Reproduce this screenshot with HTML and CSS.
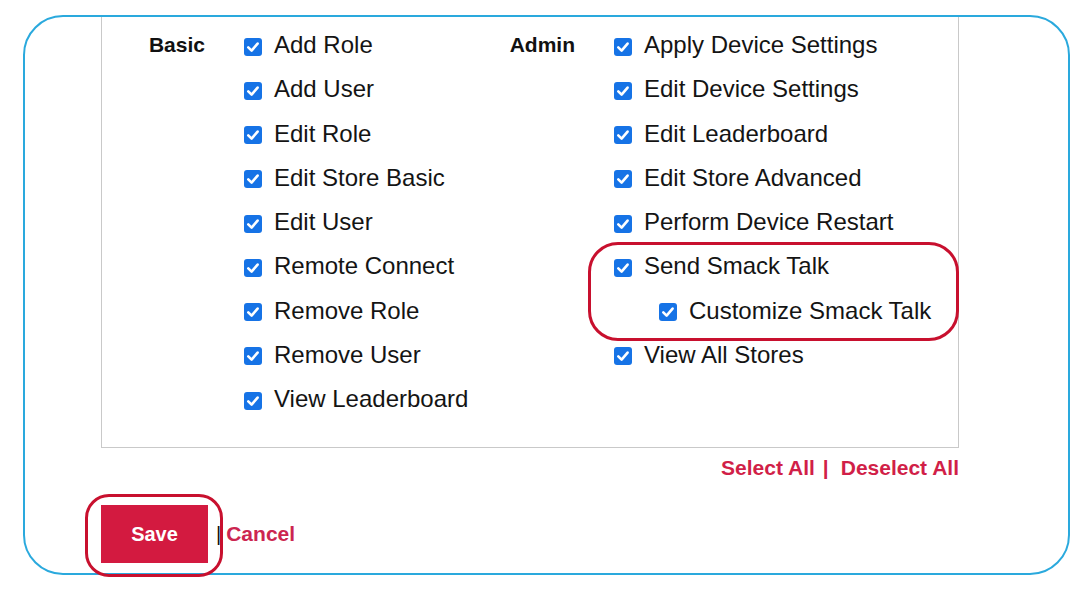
FILE: index.html
```html
<!DOCTYPE html>
<html lang="en">
<head>
<meta charset="utf-8">
<title>Permissions</title>
<link rel="stylesheet" href="styles.css">
</head>
<body>
<div class="page">
  <div class="frame">
    <div class="perm-box">
      <div class="perm-grid">
        <div class="group-label">Basic</div>
        <ul class="perm-list">
          <li><span class="cb"><svg viewBox="0 0 18 18"><path d="M4.3 9.4 L7.6 12.6 L13.6 5.6"/></svg></span>Add Role</li>
          <li><span class="cb"><svg viewBox="0 0 18 18"><path d="M4.3 9.4 L7.6 12.6 L13.6 5.6"/></svg></span>Add User</li>
          <li><span class="cb"><svg viewBox="0 0 18 18"><path d="M4.3 9.4 L7.6 12.6 L13.6 5.6"/></svg></span>Edit Role</li>
          <li><span class="cb"><svg viewBox="0 0 18 18"><path d="M4.3 9.4 L7.6 12.6 L13.6 5.6"/></svg></span>Edit Store Basic</li>
          <li><span class="cb"><svg viewBox="0 0 18 18"><path d="M4.3 9.4 L7.6 12.6 L13.6 5.6"/></svg></span>Edit User</li>
          <li><span class="cb"><svg viewBox="0 0 18 18"><path d="M4.3 9.4 L7.6 12.6 L13.6 5.6"/></svg></span>Remote Connect</li>
          <li><span class="cb"><svg viewBox="0 0 18 18"><path d="M4.3 9.4 L7.6 12.6 L13.6 5.6"/></svg></span>Remove Role</li>
          <li><span class="cb"><svg viewBox="0 0 18 18"><path d="M4.3 9.4 L7.6 12.6 L13.6 5.6"/></svg></span>Remove User</li>
          <li><span class="cb"><svg viewBox="0 0 18 18"><path d="M4.3 9.4 L7.6 12.6 L13.6 5.6"/></svg></span>View Leaderboard</li>
        </ul>
        <div class="group-label">Admin</div>
        <ul class="perm-list">
          <li><span class="cb"><svg viewBox="0 0 18 18"><path d="M4.3 9.4 L7.6 12.6 L13.6 5.6"/></svg></span>Apply Device Settings</li>
          <li><span class="cb"><svg viewBox="0 0 18 18"><path d="M4.3 9.4 L7.6 12.6 L13.6 5.6"/></svg></span>Edit Device Settings</li>
          <li><span class="cb"><svg viewBox="0 0 18 18"><path d="M4.3 9.4 L7.6 12.6 L13.6 5.6"/></svg></span>Edit Leaderboard</li>
          <li><span class="cb"><svg viewBox="0 0 18 18"><path d="M4.3 9.4 L7.6 12.6 L13.6 5.6"/></svg></span>Edit Store Advanced</li>
          <li><span class="cb"><svg viewBox="0 0 18 18"><path d="M4.3 9.4 L7.6 12.6 L13.6 5.6"/></svg></span>Perform Device Restart</li>
          <li><span class="cb"><svg viewBox="0 0 18 18"><path d="M4.3 9.4 L7.6 12.6 L13.6 5.6"/></svg></span>Send Smack Talk</li>
          <li class="sub"><span class="cb"><svg viewBox="0 0 18 18"><path d="M4.3 9.4 L7.6 12.6 L13.6 5.6"/></svg></span>Customize Smack Talk</li>
          <li><span class="cb"><svg viewBox="0 0 18 18"><path d="M4.3 9.4 L7.6 12.6 L13.6 5.6"/></svg></span>View All Stores</li>
        </ul>
      </div>
    </div>
    <div class="select-row">
      <a class="link">Select All</a><span class="sep">|</span><a class="link">Deselect All</a>
    </div>
    <div class="actions">
      <button class="save-btn">Save</button>
      <span class="bar">|</span>
      <a class="cancel">Cancel</a>
    </div>
  </div>
  <div class="highlight hl-smack"></div>
  <div class="highlight hl-save"></div>
</div>
</body>
</html>
```

FILE: styles.css
```css
* { box-sizing: border-box; }
html, body { margin: 0; padding: 0; background: #fff; }
body { font-family: "Liberation Sans", Arial, sans-serif; color: #111; }

.page { position: relative; width: 1089px; height: 590px; padding-top: 15px; padding-left: 23px; }

.frame {
  width: 1047px;
  height: 560px;
  border: 2px solid #2aa9dd;
  border-radius: 40px;
  padding-left: 76px;
}

.perm-box {
  width: 858px;
  border: 1px solid #c9c9c9;
  border-top: none;
  padding: 6px 0 26px 0;
}

.perm-grid {
  display: grid;
  grid-template-columns: 103px 267px 103px 1fr;
  align-items: start;
}

.group-label {
  font-weight: bold;
  font-size: 21px;
  text-align: right;
  height: 44.25px;
  line-height: 44.25px;
  color: #111;
}

.perm-list { list-style: none; margin: 0; padding: 0 0 0 39px; }
.perm-list li {
  display: flex;
  align-items: center;
  height: 44.25px;
  font-size: 24px;
  white-space: nowrap;
  color: #141414;
}
.perm-list li.sub { padding-left: 45px; }

.cb {
  flex: none;
  width: 18px;
  height: 18px;
  border-radius: 3px;
  background: #1673e6;
  margin-right: 12px;
  margin-top: 3px;
  display: flex;
}
.cb svg { width: 18px; height: 18px; }
.cb path { fill: none; stroke: #fff; stroke-width: 2.6; stroke-linecap: round; stroke-linejoin: round; }

.select-row {
  width: 858px;
  display: flex;
  justify-content: flex-end;
  margin-top: 8px;
  font-size: 21px;
  font-weight: bold;
  color: #d11f48;
  line-height: 24px;
}
.select-row .sep { margin: 0 12px 0 8px; }
.link { color: #d11f48; }

.actions {
  display: flex;
  align-items: center;
  margin-top: 25px;
}
.save-btn {
  width: 107px;
  height: 58px;
  border: none;
  background: #d31a40;
  color: #fff;
  font-family: "Liberation Sans", Arial, sans-serif;
  font-weight: bold;
  font-size: 20px;
  padding: 0;
}
.bar { font-size: 20px; color: #111; margin-left: 8px; margin-right: 5px; line-height: 20px; }
.cancel { font-size: 21px; font-weight: bold; color: #cc2550; }

.highlight {
  position: absolute;
  border: 3px solid #c8102e;
}
.hl-smack { left: 588px; top: 242px; width: 371px; height: 99px; border-radius: 30px; }
.hl-save { left: 85px; top: 494px; width: 138px; height: 83px; border-radius: 24px; }
```
